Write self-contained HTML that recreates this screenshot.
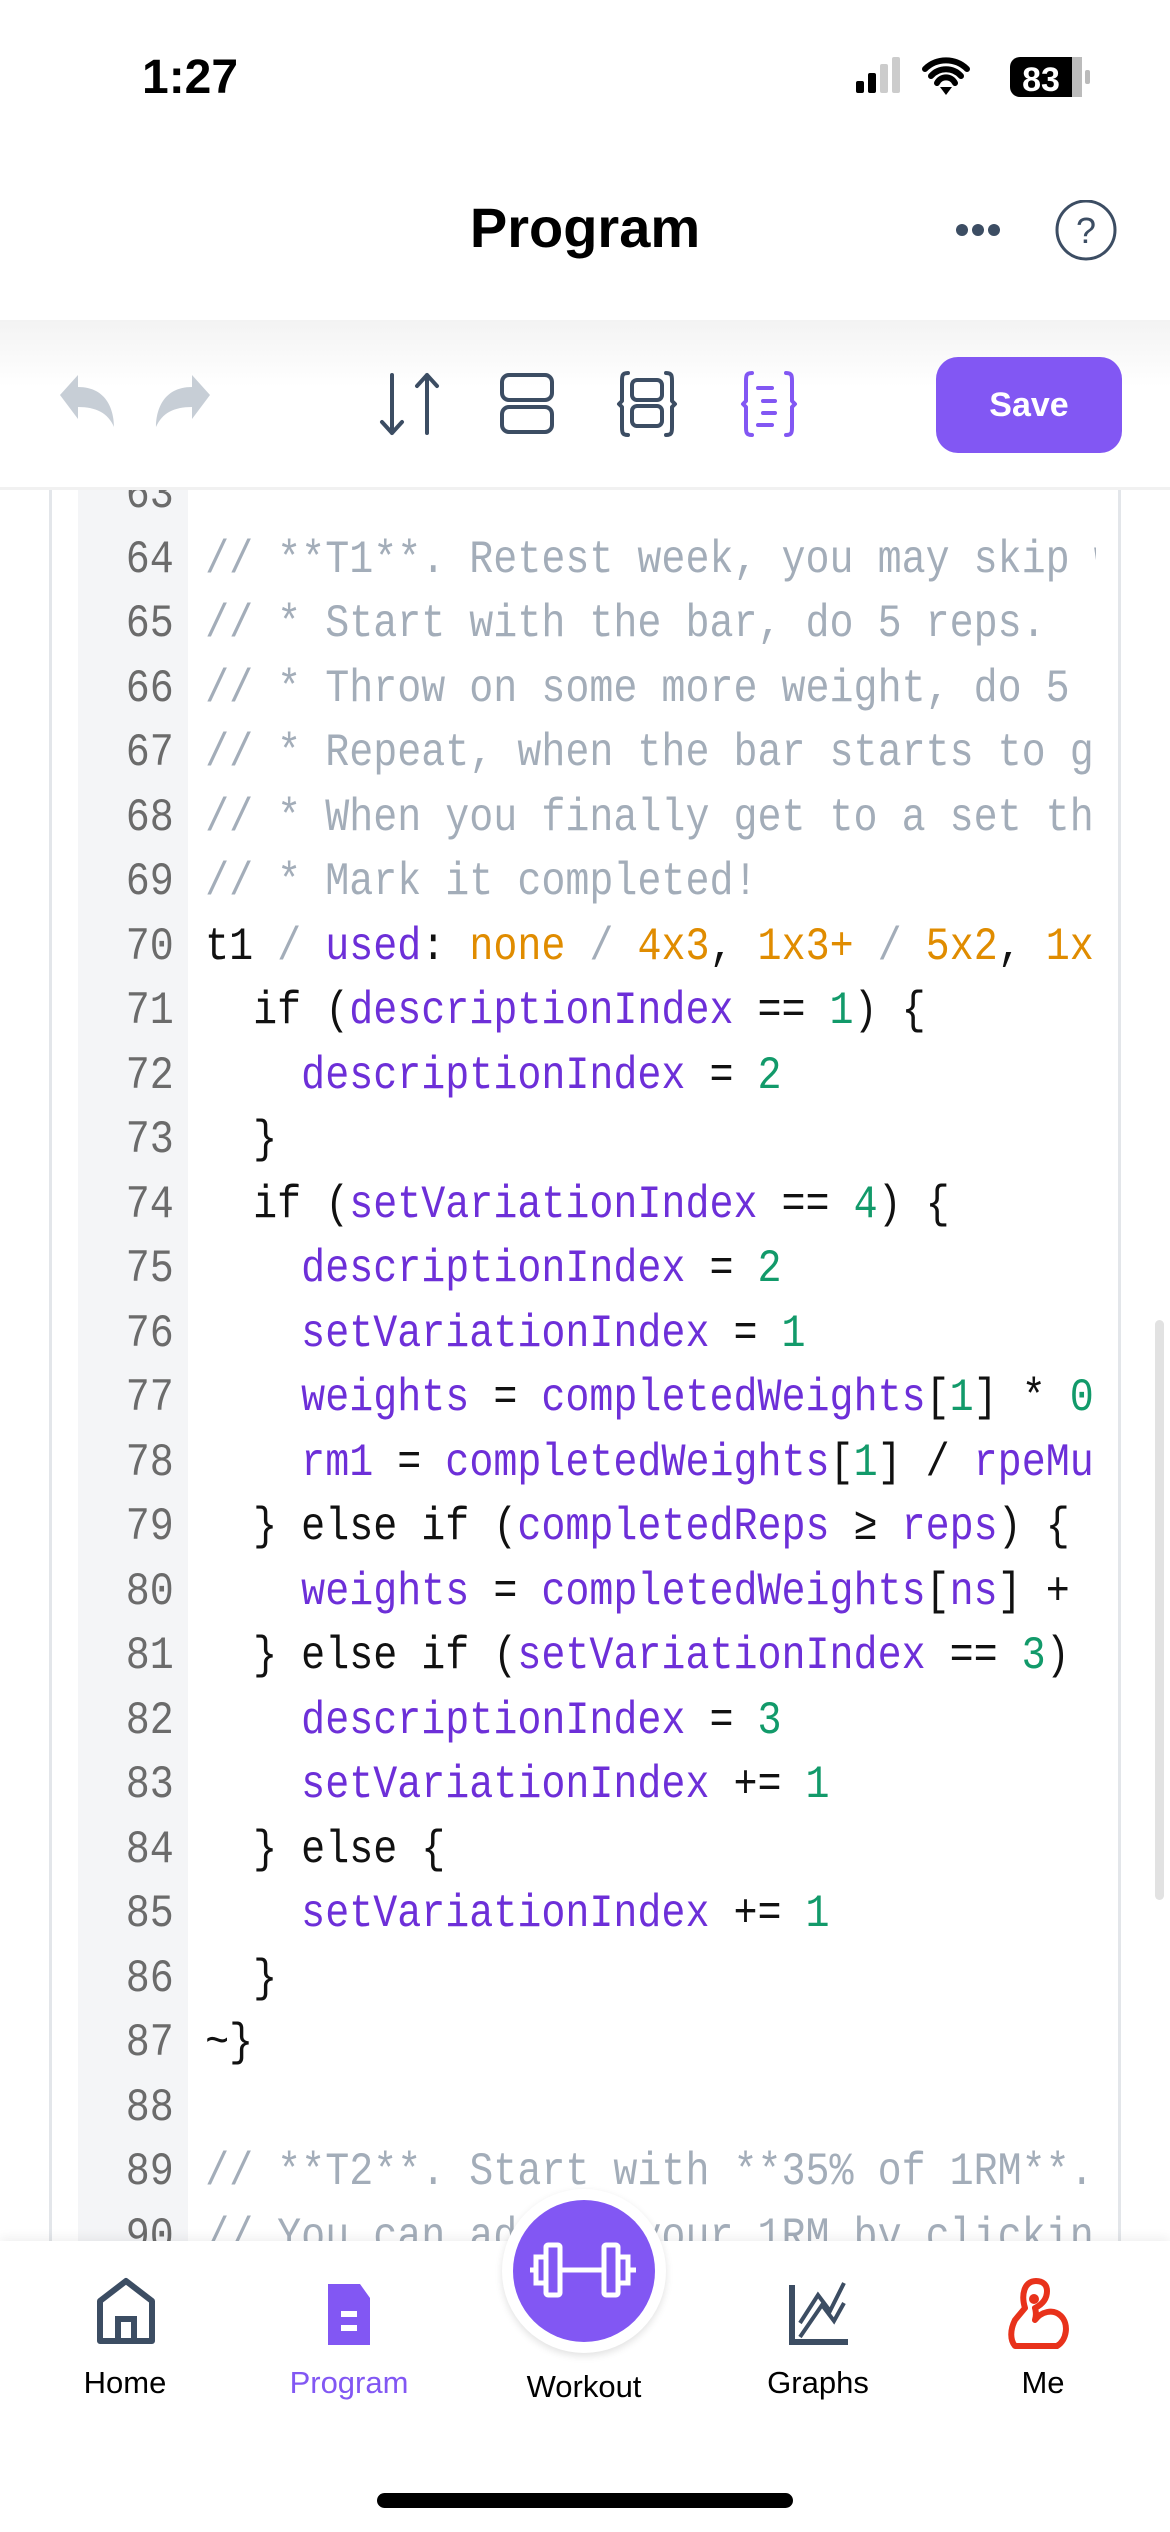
<!DOCTYPE html>
<html><head><meta charset="utf-8"><style>
*{margin:0;padding:0;box-sizing:border-box}
body{width:1170px;height:2532px;background:#fff;position:relative;overflow:hidden;font-family:"Liberation Sans",sans-serif}
.abs{position:absolute}
.code{position:absolute;left:49px;top:490px;width:1072px;height:1751px;border-left:3px solid #e3e6ea;border-right:3px solid #e3e6ea;overflow:hidden;background:#fff}
.gut{position:absolute;left:26px;top:0;width:110px;height:100%;background:#f4f5f7}
.lines{position:absolute;left:0;top:-27px;font-family:"Liberation Mono",monospace;font-size:46px;line-height:64.5px;transform:scaleX(.87);transform-origin:0 0}
.ln{display:inline-block;width:140px;text-align:right;color:#6b6b6b;margin-right:36px}
.l{height:64.5px;width:1200px;overflow:hidden;color:#111;white-space:pre}
.c{color:#a3adb9}.p{color:#6d2fd8}.o{color:#e08c00}.g{color:#129a6a}
.nav{position:absolute;left:0;top:2241px;width:1170px;height:291px;background:#fff;box-shadow:0 -4px 10px rgba(0,0,0,.06)}
.lab{position:absolute;font-size:31px;text-align:center;width:200px}
</style></head><body>
<div class="abs" style="left:142px;top:50px;font-size:48px;font-weight:bold">1:27</div>
<svg class="abs" style="left:850px;top:55px" width="260" height="45">
<rect x="6" y="26" width="8" height="12" rx="2" fill="#000"/><rect x="18" y="18" width="8" height="20" rx="2" fill="#000"/><rect x="30" y="9" width="8" height="29" rx="2" fill="#ccc"/><rect x="42" y="2" width="8" height="36" rx="2" fill="#ccc"/>
<path d="M75 14a30 30 0 0 1 42 0M81 21a20 20 0 0 1 30 0M87 28a10 10 0 0 1 18 0" stroke="#000" stroke-width="6" fill="none" stroke-linecap="round"/><path d="M90 32l6 8 6-8z" fill="#000"/>
<rect x="160" y="2" width="72" height="40" rx="10" fill="#000"/><rect x="222" y="2" width="10" height="40" fill="#bbb"/><rect x="235" y="15" width="5" height="14" rx="2" fill="#bbb"/>
<text x="191" y="36" font-size="34" font-weight="bold" fill="#fff" text-anchor="middle" font-family="Liberation Sans">83</text></svg>
<div class="abs" style="left:0;width:1170px;top:195px;text-align:center;font-size:56px;font-weight:bold">Program</div>
<svg class="abs" style="left:950px;top:200px" width="180" height="70"><circle cx="12" cy="30" r="6" fill="#3c4d63"/><circle cx="28" cy="30" r="6" fill="#3c4d63"/><circle cx="44" cy="30" r="6" fill="#3c4d63"/>
<circle cx="136" cy="30" r="29" stroke="#3c4d63" stroke-width="3" fill="none"/><text x="136" y="43" font-size="36" fill="#3c4d63" text-anchor="middle">?</text></svg>
<div class="abs" style="left:0;top:320px;width:1170px;height:170px;background:linear-gradient(#f3f3f3,#fff 40%);border-bottom:3px solid #f1f1f1"></div>
<svg class="abs" style="left:40px;top:370px" width="800" height="70">
<path d="M20 25l18-20v12c30 0 36 25 36 40c-6-14-18-20-36-20v12z" fill="#c7ced6"/>
<path d="M170 25l-18-20v12c-30 0-36 25-36 40c6-14 18-20 36-20v12z" fill="#c7ced6"/>
<g stroke="#3c4d63" stroke-width="4" fill="none" stroke-linecap="round" stroke-linejoin="round">
<path d="M352 5v58M342 52l10 11 10-11M387 63V5M377 16l10-11 10 11"/>
<rect x="462" y="5" width="50" height="25" rx="7"/><rect x="462" y="37" width="50" height="25" rx="7"/>
<rect x="592" y="10" width="30" height="20" rx="5"/><rect x="592" y="36" width="30" height="20" rx="5"/>
<path d="M588 3c-6 0-6 3-6 8v20l-3 3 3 3v20c0 5 0 8 6 8M626 3c6 0 6 3 6 8v20l3 3-3 3v20c0 5 0 8-6 8"/>
<g stroke="#8257f3"><path d="M712 3c-6 0-6 3-6 8v20l-3 3 3 3v20c0 5 0 8 6 8M746 3c6 0 6 3 6 8v20l3 3-3 3v20c0 5 0 8-6 8M718 18h14M723 31h12M723 43h12M718 55h14"/></g></g></svg>
<div class="abs" style="left:936px;top:357px;width:186px;height:96px;border-radius:22px;background:#8257f3;color:#fff;font-size:34px;font-weight:bold;text-align:center;line-height:96px">Save</div>
<div class="code"><div class="gut"></div><div class="lines"><div class="l"><span class="ln">63</span></div><div class="l"><span class="ln">64</span><span class="c">// **T1**. Retest week, you may skip w</span></div><div class="l"><span class="ln">65</span><span class="c">// * Start with the bar, do 5 reps.</span></div><div class="l"><span class="ln">66</span><span class="c">// * Throw on some more weight, do 5 </span></div><div class="l"><span class="ln">67</span><span class="c">// * Repeat, when the bar starts to ge</span></div><div class="l"><span class="ln">68</span><span class="c">// * When you finally get to a set tha</span></div><div class="l"><span class="ln">69</span><span class="c">// * Mark it completed!</span></div><div class="l"><span class="ln">70</span>t1 <span class="c">/</span> <span class="p">used</span>: <span class="o">none</span> <span class="c">/</span> <span class="o">4x3</span>, <span class="o">1x3+</span> <span class="c">/</span> <span class="o">5x2</span>, <span class="o">1x2</span></div><div class="l"><span class="ln">71</span>  if (<span class="p">descriptionIndex</span> == <span class="g">1</span>) {</div><div class="l"><span class="ln">72</span>    <span class="p">descriptionIndex</span> = <span class="g">2</span></div><div class="l"><span class="ln">73</span>  }</div><div class="l"><span class="ln">74</span>  if (<span class="p">setVariationIndex</span> == <span class="g">4</span>) {</div><div class="l"><span class="ln">75</span>    <span class="p">descriptionIndex</span> = <span class="g">2</span></div><div class="l"><span class="ln">76</span>    <span class="p">setVariationIndex</span> = <span class="g">1</span></div><div class="l"><span class="ln">77</span>    <span class="p">weights</span> = <span class="p">completedWeights</span>[<span class="g">1</span>] * <span class="g">0</span></div><div class="l"><span class="ln">78</span>    <span class="p">rm1</span> = <span class="p">completedWeights</span>[<span class="g">1</span>] / <span class="p">rpeMul</span></div><div class="l"><span class="ln">79</span>  } else if (<span class="p">completedReps</span> ≥ <span class="p">reps</span>) {</div><div class="l"><span class="ln">80</span>    <span class="p">weights</span> = <span class="p">completedWeights</span>[<span class="p">ns</span>] + s</div><div class="l"><span class="ln">81</span>  } else if (<span class="p">setVariationIndex</span> == <span class="g">3</span>) {</div><div class="l"><span class="ln">82</span>    <span class="p">descriptionIndex</span> = <span class="g">3</span></div><div class="l"><span class="ln">83</span>    <span class="p">setVariationIndex</span> += <span class="g">1</span></div><div class="l"><span class="ln">84</span>  } else {</div><div class="l"><span class="ln">85</span>    <span class="p">setVariationIndex</span> += <span class="g">1</span></div><div class="l"><span class="ln">86</span>  }</div><div class="l"><span class="ln">87</span>~}</div><div class="l"><span class="ln">88</span></div><div class="l"><span class="ln">89</span><span class="c">// **T2**. Start with **35% of 1RM**.</span></div><div class="l"><span class="ln">90</span><span class="c">// You can adjust your 1RM by clickin</span></div></div>
<div class="abs" style="left:1050px;top:0;width:19px;height:100%;background:#fff"></div></div>
<div class="abs" style="left:1155px;top:1320px;width:9px;height:580px;border-radius:5px;background:#e2e2e2"></div>
<div class="nav">
<svg class="abs" style="left:0;top:0" width="1170" height="120">
<path d="M100 100V60l26-20 26 20v40z" stroke="#3c4d63" stroke-width="6" fill="none" stroke-linejoin="round"/><path d="M118 100V78h16v22" stroke="#3c4d63" stroke-width="6" fill="none"/>
<path d="M328 43h32l10 14v47h-42z" fill="#8257f3"/><rect x="341" y="70" width="16" height="6" fill="#fff"/><rect x="341" y="84" width="16" height="6" fill="#fff"/>
<path d="M792 44v57h56" stroke="#3c4d63" stroke-width="6" fill="none"/><path d="M800 82l18-28 12 16 14-28M800 96l22-32 12 16 10-18" stroke="#3c4d63" stroke-width="4" fill="none"/>
<path d="M1036 40c-12 0-15 14-11 27l-10 12c-5 10-5 20 0 26h42c10-6 12-22 4-30c-8-8-20-4-26 4c2-6 0-12 0-12c8-4 12-10 12-17c0-6-4-10-11-10z" stroke="#e8321b" stroke-width="6" fill="none" stroke-linejoin="round"/><circle cx="1034" cy="58" r="5" fill="#e8321b"/>
</svg>
<div class="lab" style="left:25px;top:124px">Home</div>
<div class="lab" style="left:249px;top:124px;color:#8257f3">Program</div>
<div class="lab" style="left:484px;top:128px">Workout</div>
<div class="lab" style="left:718px;top:124px">Graphs</div>
<div class="lab" style="left:943px;top:124px">Me</div>
</div>
<div class="abs" style="left:502px;top:2189px;width:164px;height:164px;border-radius:50%;background:#fff;box-shadow:0 3px 8px rgba(0,0,0,.12)"></div>
<div class="abs" style="left:513px;top:2200px;width:142px;height:142px;border-radius:50%;background:#8257f3"></div>
<svg class="abs" style="left:530px;top:2235px" width="110" height="70" stroke="#fff" stroke-width="5" fill="none"><rect x="16" y="10" width="14" height="50" rx="2"/><rect x="74" y="10" width="14" height="50" rx="2"/><rect x="6" y="22" width="10" height="26"/><rect x="88" y="22" width="10" height="26"/><path d="M30 35h44M0 35h6M98 35h8"/></svg>
<div class="abs" style="left:377px;top:2493px;width:416px;height:15px;border-radius:8px;background:#000"></div>
</body></html>
